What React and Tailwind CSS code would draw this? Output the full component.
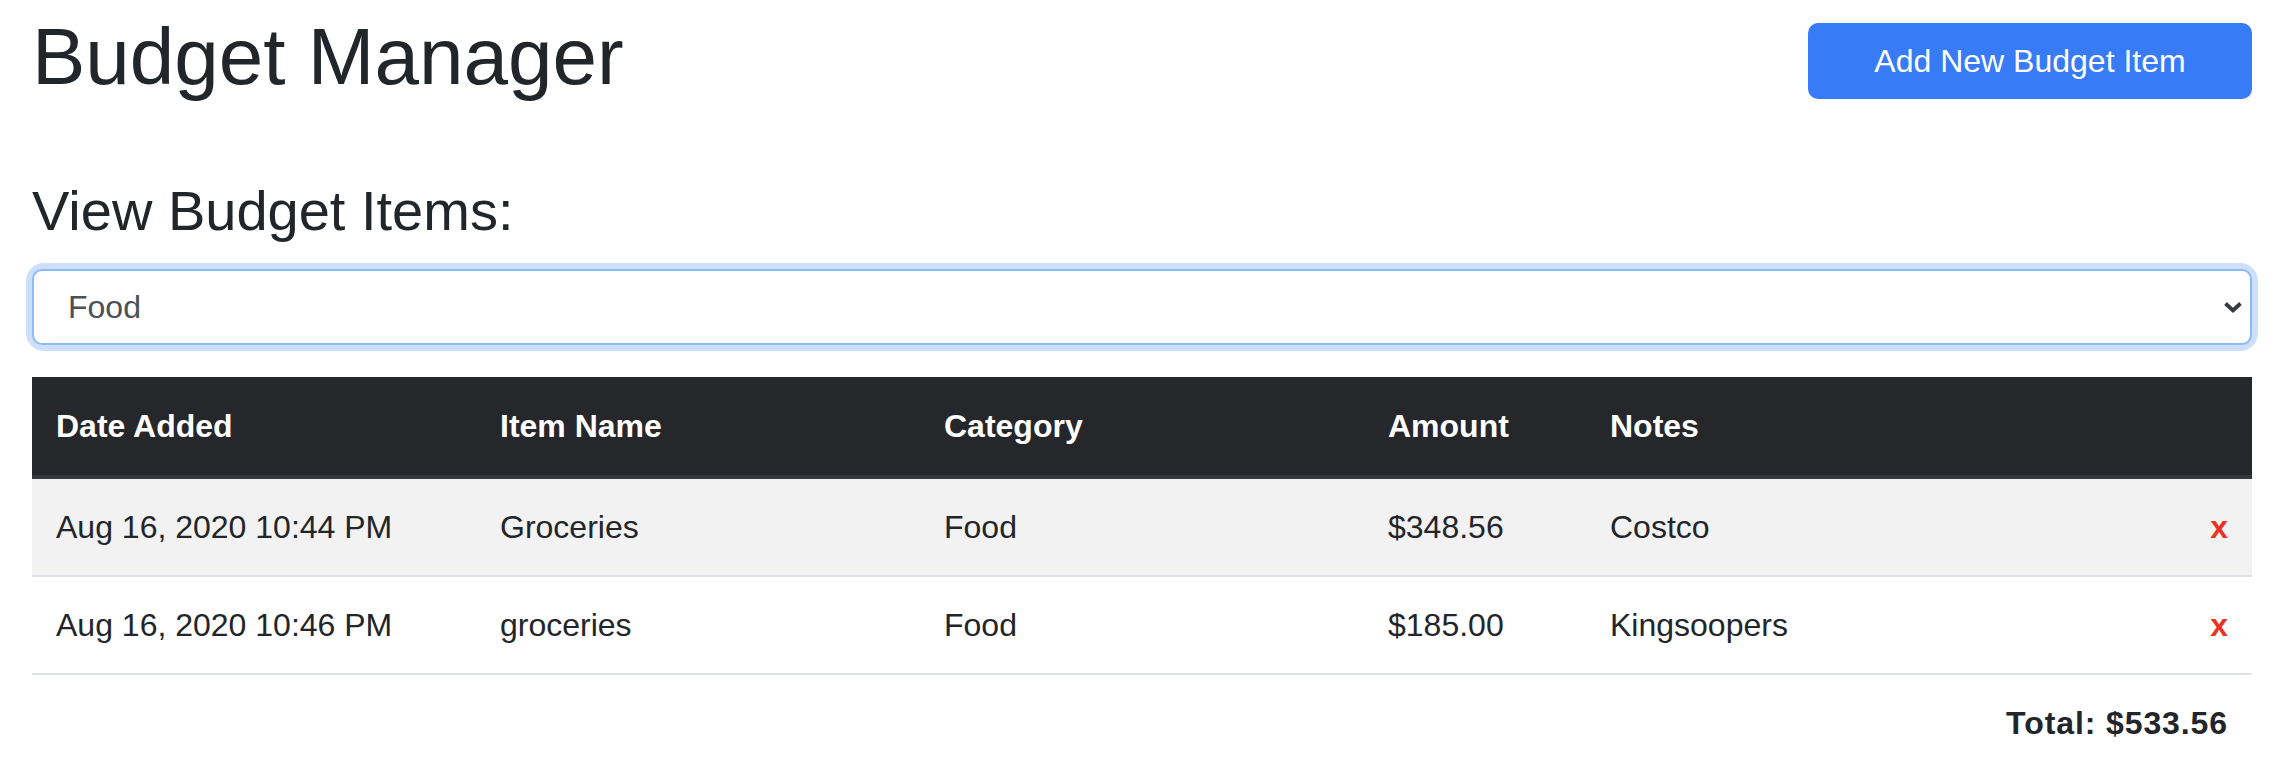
const items = [
  { id: 1, date: 'Aug 16, 2020 10:44 PM', name: 'Groceries', category: 'Food', amount: '$348.56', notes: 'Costco' },
  { id: 2, date: 'Aug 16, 2020 10:46 PM', name: 'groceries', category: 'Food', amount: '$185.00', notes: 'Kingsoopers' },
]

function Chevron() {
  return (
    <svg width="20" height="14" viewBox="0 0 20 14" fill="none">
      <path d="M2.5 3.5 L10 10.5 L17.5 3.5" stroke="#343a40" strokeWidth="3.8" />
    </svg>
  )
}

export default function App() {
  return (
    <div className="min-h-screen bg-white pl-[32px] pr-[28px] text-[#222529] font-['Liberation_Sans',Arial,sans-serif]">
      <div className="flex items-start justify-between">
        <h1 className="mt-[9px] text-[80px] leading-[96px] font-normal">Budget Manager</h1>
        <button className="mt-[23px] flex h-[76px] w-[444px] items-center justify-center rounded-[10px] bg-[#377cf6] text-[32px] leading-[48px] text-white">
          Add New Budget Item
        </button>
      </div>

      <h3 className="mt-[72px] text-[56px] leading-[67px] font-normal">View Budget Items:</h3>

      <div className="mt-[25px] rounded-[12px] shadow-[0_0_0_6px_#cddffc]">
        <div className="flex h-[76px] items-center justify-between rounded-[10px] border-2 border-[#8cbbfb] bg-white pl-[34px] pr-[7px] text-[32px] text-[#4a5056]">
          <span>Food</span>
          <Chevron />
        </div>
      </div>

      <table className="mt-[32px] w-full table-fixed border-collapse text-[32px] leading-[48px]">
        <colgroup>
          <col className="w-[20%]" />
          <col className="w-[20%]" />
          <col className="w-[20%]" />
          <col className="w-[10%]" />
          <col className="w-[24%]" />
          <col className="w-[6%]" />
        </colgroup>
        <thead>
          <tr className="bg-[#25272b] text-white border-b-4 border-[#34383c]">
            <th className="px-[24px] py-[25px] text-left font-bold">Date Added</th>
            <th className="px-[24px] py-[25px] text-left font-bold">Item Name</th>
            <th className="px-[24px] py-[25px] text-left font-bold">Category</th>
            <th className="px-[24px] py-[25px] text-left font-bold">Amount</th>
            <th className="px-[24px] py-[25px] text-left font-bold">Notes</th>
            <th className="px-[24px] py-[25px]"></th>
          </tr>
        </thead>
        <tbody>
          {items.map((item, i) => (
            <tr key={item.id} className={`border-b-2 border-[#dee2e6] ${i % 2 === 0 ? 'bg-[#f2f2f2]' : 'bg-white'}`}>
              <td className="px-[24px] py-[24px]">{item.date}</td>
              <td className="px-[24px] py-[24px]">{item.name}</td>
              <td className="px-[24px] py-[24px]">{item.category}</td>
              <td className="px-[24px] py-[24px]">{item.amount}</td>
              <td className="px-[24px] py-[24px]">{item.notes}</td>
              <td className="px-[24px] py-[24px] text-right font-bold text-[#ea3323]">x</td>
            </tr>
          ))}
        </tbody>
      </table>

      <div className="px-[24px] pt-[24px] text-right text-[32px] leading-[48px] font-bold tracking-[0.9px]">Total: $533.56</div>
    </div>
  )
}
